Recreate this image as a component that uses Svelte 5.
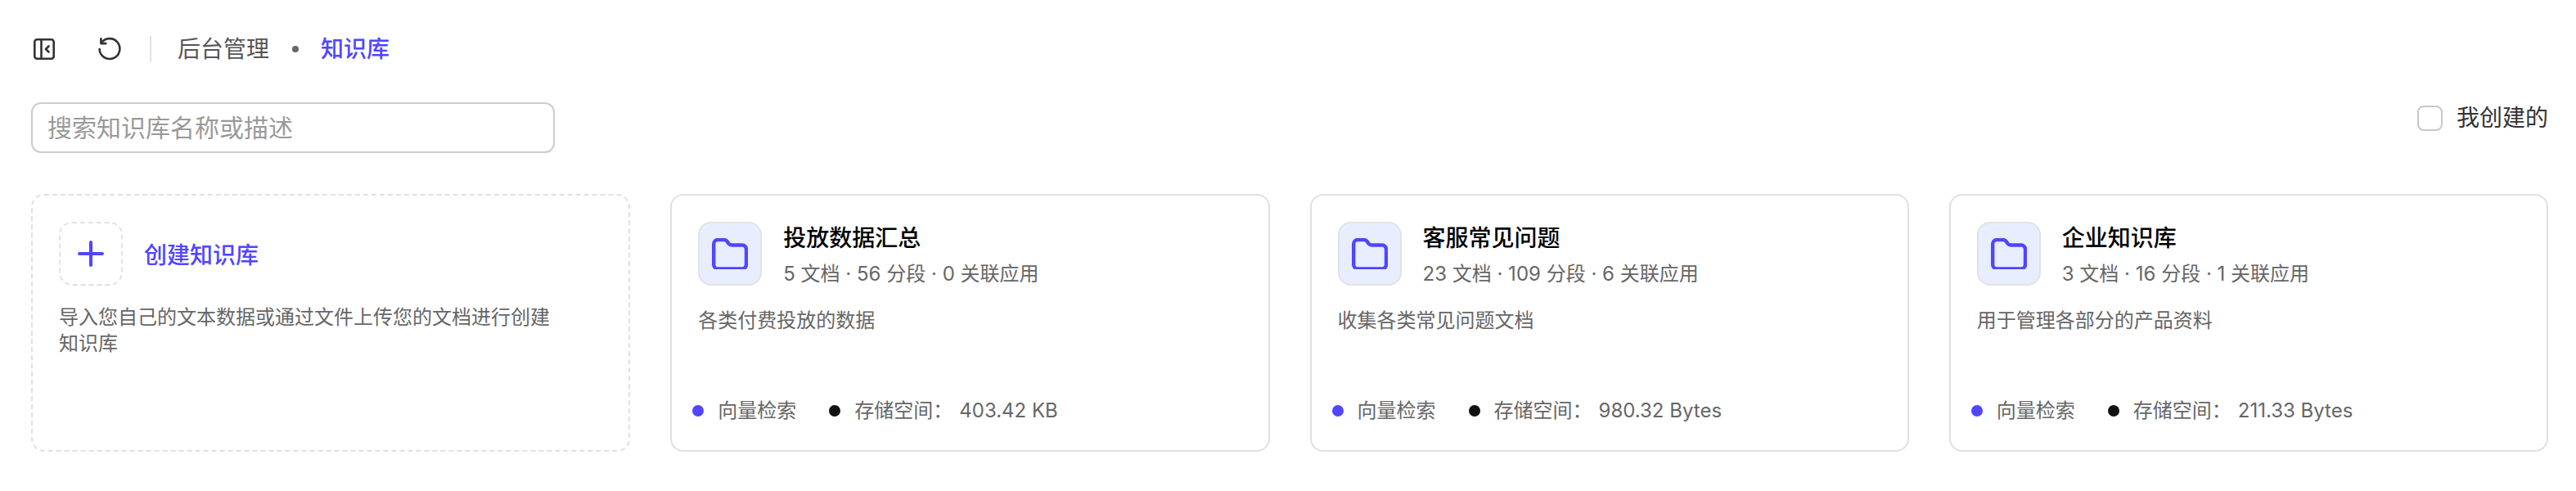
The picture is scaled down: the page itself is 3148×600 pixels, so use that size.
<script>
    let cards = [
        { title: "投放数据汇总", meta: "5 文档 · 56 分段 · 0 关联应用", desc: "各类付费投放的数据", size: "403.42 KB" },
        { title: "客服常见问题", meta: "23 文档 · 109 分段 · 6 关联应用", desc: "收集各类常见问题文档", size: "980.32 Bytes" },
        { title: "企业知识库", meta: "3 文档 · 16 分段 · 1 关联应用", desc: "用于管理各部分的产品资料", size: "211.33 Bytes" },
    ];
</script>

<div class="page">
    <header class="topbar">
        <button class="icon-btn" aria-label="collapse">
            <svg width="32" height="32" viewBox="0 0 32 32" fill="none" stroke="#333" stroke-width="2.6" stroke-linejoin="round" stroke-linecap="round">
                <rect x="4.3" y="4.3" width="23.4" height="23.4" rx="3" />
                <path d="M12.5 4.3v23.4" />
                <path d="M21.5 12.5 18 16l3.5 3.5" />
            </svg>
        </button>
        <button class="icon-btn refresh" aria-label="refresh">
            <svg width="32" height="32" viewBox="0 0 32 32" fill="none" stroke="#333" stroke-width="2.6" stroke-linejoin="round" stroke-linecap="round">
                <path d="M5.8 8.5A12.4 12.4 0 1 1 3.6 16" />
                <path d="M5.4 3.2v5.9h5.9" />
            </svg>
        </button>
        <span class="divider"></span>
        <span class="crumb">后台管理</span>
        <span class="crumb-dot"></span>
        <span class="crumb active">知识库</span>
    </header>

    <div class="filters">
        <input class="search" type="text" placeholder="搜索知识库名称或描述" />
        <label class="mine">
            <input type="checkbox" />
            <span class="box"></span>
            我创建的
        </label>
    </div>

    <div class="grid">
        <div class="card create">
            <div class="head center">
                <div class="add-icon">
                    <svg width="32" height="32" viewBox="0 0 32 32" fill="none" stroke="#5046ff" stroke-width="4" stroke-linecap="round">
                        <path d="M16 2v28M2 16h28" />
                    </svg>
                </div>
                <span class="create-title">创建知识库</span>
            </div>
            <p class="desc narrow">导入您自己的文本数据或通过文件上传您的文档进行创建知识库</p>
        </div>

        {#each cards as card}
            <div class="card">
                <div class="head">
                    <div class="folder-icon">
                        <svg width="44" height="38" viewBox="0 0 44 38" fill="none" stroke="#5046ff" stroke-width="4.4" stroke-linejoin="round">
                            <path d="M2.2 7a5 5 0 0 1 5-5h7.5a5 5 0 0 1 4 2l1.600 2.500a5 5 0 0 0 4 2H37a5 5 0 0 1 5 5v19a5 5 0 0 1-5 5H7.200a5 5 0 0 1-5-5z" />
                        </svg>
                    </div>
                    <div class="info">
                        <div class="title">{card.title}</div>
                        <div class="meta">{card.meta}</div>
                    </div>
                </div>
                <p class="desc">{card.desc}</p>
                <div class="footer">
                    <span class="dot blue"></span>
                    <span class="tag">向量检索</span>
                    <span class="dot black"></span>
                    <span>存储空间：</span>
                    <span class="size">{card.size}</span>
                </div>
            </div>
        {/each}
    </div>
</div>

<style>
    :global(body) {
        background: #fff;
    }
    .page {
        height: 600px;
        box-sizing: border-box;
        padding: 44px 34px 0 38px;
        font-family: Inter, "Noto Sans CJK SC", sans-serif;
        color: #666;
        overflow: hidden;
    }
    .topbar {
        display: flex;
        align-items: center;
        height: 32px;
    }
    .icon-btn {
        width: 32px;
        height: 32px;
        padding: 0;
        border: none;
        background: none;
        display: flex;
    }
    .icon-btn svg {
        display: block;
    }
    .refresh {
        margin-left: 48px;
    }
    .divider {
        width: 2px;
        height: 32px;
        background: #e2e2e2;
        margin: 0 32px 0 33px;
    }
    .crumb {
        font-size: 28px;
        color: #555;
        line-height: 32px;
    }
    .crumb.active {
        color: #5046ff;
        font-weight: 500;
    }
    .crumb-dot {
        width: 8px;
        height: 8px;
        border-radius: 50%;
        background: #666;
        margin: 0 27px 0 28px;
    }
    .filters {
        display: flex;
        justify-content: space-between;
        align-items: flex-start;
        margin-top: 49px;
    }
    .search {
        width: 640px;
        height: 62px;
        box-sizing: border-box;
        border: 2px solid #ccc;
        border-radius: 12px;
        padding: 0 18px;
        font-family: inherit;
        font-size: 30px;
        outline: none;
    }
    .search::placeholder {
        color: #999;
    }
    .mine {
        display: flex;
        align-items: center;
        gap: 17px;
        margin-top: 3px;
        font-size: 28px;
        line-height: 32px;
        color: #333;
    }
    .mine input {
        display: none;
    }
    .box {
        width: 31px;
        height: 31px;
        box-sizing: border-box;
        border: 2px solid #c8c8c8;
        border-radius: 8px;
    }
    .grid {
        display: grid;
        grid-template-columns: repeat(4, 1fr);
        gap: 49px;
        margin-top: 50px;
    }
    .card {
        height: 315px;
        box-sizing: border-box;
        border: 2px solid #e0e0e0;
        border-radius: 16px;
        padding: 32px 32px 32px;
        display: flex;
        flex-direction: column;
    }
    .card.create {
        border-style: dashed;
    }
    .head {
        display: flex;
        gap: 26px;
    }
    .head.center {
        align-items: center;
    }
    .add-icon,
    .folder-icon {
        width: 78px;
        height: 78px;
        box-sizing: border-box;
        border-radius: 16px;
        display: flex;
        align-items: center;
        justify-content: center;
        flex-shrink: 0;
    }
    .add-icon {
        border: 2px dashed #e2e2e2;
    }
    .folder-icon {
        border: 2px solid #e2e2e2;
        background: #e8edff;
    }
    .create-title {
        font-size: 28px;
        color: #5046ff;
        font-weight: 500;
    }
    .info {
        padding-top: 1px;
    }
    .title {
        font-size: 28px;
        line-height: 38px;
        font-weight: 500;
        color: #000;
    }
    .meta {
        font-size: 24px;
        line-height: 36px;
        margin-top: 7px;
        white-space: nowrap;
    }
    .desc {
        font-size: 24px;
        line-height: 32px;
        margin: 23px 0 0;
    }
    .desc.narrow {
        width: 620px;
    }
    .footer {
        margin-top: auto;
        margin-left: -7px;
        display: flex;
        align-items: center;
        font-size: 24px;
        line-height: 32px;
    }
    .dot {
        width: 14px;
        height: 14px;
        border-radius: 50%;
        margin-right: 17px;
    }
    .dot.blue {
        background: #5046ff;
    }
    .dot.black {
        background: #111;
    }
    .tag {
        margin-right: 40px;
    }
    .size {
        margin-left: 8px;
    }
</style>
